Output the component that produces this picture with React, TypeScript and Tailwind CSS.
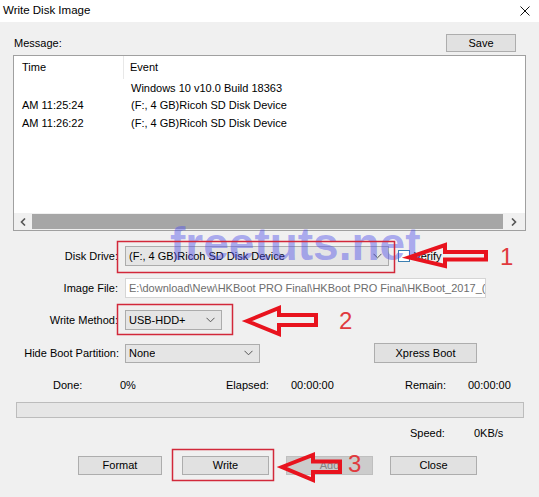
import React from "react";

const logRows = [
  { time: "", event: "Windows 10 v10.0 Build 18363" },
  { time: "AM 11:25:24", event: "(F:, 4 GB)Ricoh SD Disk Device" },
  { time: "AM 11:26:22", event: "(F:, 4 GB)Ricoh SD Disk Device" },
];

const Chevron = () => (
  <svg width="9" height="6" viewBox="0 0 9 6" className="shrink-0">
    <path d="M0.5 0.8 L4.5 4.8 L8.5 0.8" fill="none" stroke="#555" strokeWidth="1" />
  </svg>
);

const Combo = ({ value, className }: { value: string; className: string }) => (
  <div
    className={`flex items-center justify-between border border-[#acacac] bg-[#e5e5e5] pl-[3px] pr-[6px] ${className}`}
  >
    <span className="whitespace-nowrap overflow-hidden">{value}</span>
    <Chevron />
  </div>
);

const Btn = ({
  label,
  className,
  disabled,
}: {
  label: string;
  className: string;
  disabled?: boolean;
}) => (
  <div
    className={`flex items-center justify-center border ${
      disabled
        ? "border-[#bfbfbf] bg-[#cccccc] text-[#838383]"
        : "border-[#adadad] bg-[#e1e1e1]"
    } ${className}`}
  >
    {label}
  </div>
);

const Label = ({ text }: { text: string }) => (
  <div className="w-[105px] text-right whitespace-nowrap">{text}</div>
);

export default function App() {
  return (
    <div className="relative w-[539px] h-[497px] overflow-hidden bg-[#f0f0f0] font-['Liberation_Sans',Arial,sans-serif] text-[11px] text-black">
      {/* Title bar */}
      <div className="h-[22px] bg-white flex items-center justify-between pl-[3px] pr-[9px]">
        <span className="text-[11.5px]">Write Disk Image</span>
        <svg width="10" height="10" viewBox="0 0 10 10">
          <path d="M0.5 0.5 L9.5 9.5 M9.5 0.5 L0.5 9.5" stroke="#111" strokeWidth="1" />
        </svg>
      </div>

      <div className="px-[13px]">
        {/* Message + Save */}
        <div className="mt-[12px] h-[18px] flex items-center justify-between">
          <span className="pl-px">Message:</span>
          <Btn label="Save" className="w-[70px] h-[18px] mr-[10px]" />
        </div>

        {/* Log list */}
        <div className="mt-[3px] h-[176px] border border-[#a0a0a0] bg-white flex flex-col">
          <div className="h-[23px] flex items-center">
            <div className="w-[110px] h-full flex items-center pl-[8px] border-r border-[#e8e8e8]">
              Time
            </div>
            <div className="pl-[6px]">Event</div>
          </div>
          {logRows.map((row, i) => (
            <div key={i} className="h-[17.5px] flex items-center">
              <div className="w-[110px] pl-[8px]">{row.time}</div>
              <div className="pl-[7px]">{row.event}</div>
            </div>
          ))}
          <div className="flex-1" />
          <div className="h-[17px] flex items-center bg-[#f0f0f0]">
            <div className="w-[18px] flex items-center justify-center">
              <svg width="6" height="8" viewBox="0 0 6 8">
                <path d="M5 0.5 L1.5 4 L5 7.5" fill="none" stroke="#555" strokeWidth="1.6" />
              </svg>
            </div>
            <div className="flex-1 h-[15px] bg-[#a6a6a6]" />
            <div className="w-[22px] flex items-center justify-center">
              <svg width="6" height="8" viewBox="0 0 6 8">
                <path d="M1 0.5 L4.5 4 L1 7.5" fill="none" stroke="#555" strokeWidth="1.6" />
              </svg>
            </div>
          </div>
        </div>

        {/* Disk Drive */}
        <div className="mt-[15px] h-[20px] flex items-center">
          <Label text="Disk Drive:" />
          <Combo value="(F:, 4 GB)Ricoh SD Disk Device" className="ml-[7px] w-[264px] h-[20px]" />
          <div className="ml-[9px] w-[12px] h-[12px] border border-[#3c7fb1] bg-white" />
          <span className="ml-[4px]">Verify</span>
        </div>

        {/* Image File */}
        <div className="mt-[12px] h-[20px] flex items-center">
          <Label text="Image File:" />
          <div className="ml-[7px] w-[361px] h-[20px] flex items-center border border-[#d5d5d5] bg-white pl-[3px] text-[#6d6d6d] overflow-hidden whitespace-nowrap">
            E:\download\New\HKBoot PRO Final\HKBoot PRO Final\HKBoot_2017_(
          </div>
        </div>

        {/* Write Method */}
        <div className="mt-[12px] h-[20px] flex items-center">
          <Label text="Write Method:" />
          <Combo value="USB-HDD+" className="ml-[7px] w-[97px] h-[20px]" />
        </div>

        {/* Hide Boot Partition */}
        <div className="mt-[13px] h-[20px] flex items-center">
          <div className="w-[106px] text-right whitespace-nowrap">Hide Boot Partition:</div>
          <Combo value="None" className="ml-[6px] w-[135px] h-[19px]" />
          <Btn label="Xpress Boot" className="ml-[114px] w-[103px] h-[20px]" />
        </div>

        {/* Status */}
        <div className="mt-[15px] h-[15px] flex items-center pl-[40px]">
          <span className="w-[67px]">Done:</span>
          <span className="w-[106px]">0%</span>
          <span className="w-[65px]">Elapsed:</span>
          <span className="w-[114px]">00:00:00</span>
          <span className="w-[63px]">Remain:</span>
          <span>00:00:00</span>
        </div>

        <div className="mt-[9px] ml-[3px] w-[508px] h-[16px] border border-[#bcbcbc] bg-[#e6e6e6]" />

        <div className="mt-[8px] h-[15px] flex items-center pl-[397px]">
          <span className="w-[64px]">Speed:</span>
          <span>0KB/s</span>
        </div>

        {/* Buttons */}
        <div className="mt-[15px] h-[19px] flex pl-[65px]">
          <Btn label="Format" className="w-[84px] h-[19px]" />
          <Btn label="Write" className="ml-[20px] w-[87px] h-[19px]" />
          <Btn label="Add" disabled className="ml-[17px] w-[87px] h-[19px]" />
          <Btn label="Close" className="ml-[17px] w-[87px] h-[19px]" />
        </div>
      </div>

      {/* Watermark */}
      <div className="absolute left-[170px] top-[221px] text-[46px] leading-none font-bold text-[rgba(80,80,235,0.45)] pointer-events-none whitespace-nowrap">
        freetuts.net
      </div>

      {/* Annotations */}
      <svg className="absolute inset-0 pointer-events-none" width="539" height="497" viewBox="0 0 539 497">
        <g fill="none" stroke="#d2283a" strokeWidth="1.5">
          <rect x="117.5" y="241.5" width="277" height="31" />
          <rect x="117.5" y="304.5" width="115" height="30" />
          <rect x="172.5" y="449.5" width="101" height="31" />
        </g>
        <g fill="none" stroke="#e8131e" strokeWidth="4" strokeLinejoin="miter">
          <path d="M409 257.5 L445 245 L445 252 L486 252 L486 259.5 L445 259.5 L445 266 Z" />
          <path d="M247 321 L279 308 L279 315 L316 315 L316 325 L279 325 L279 334 Z" />
          <path d="M282 467 L313 455 L313 461.5 L340 461.5 L340 472 L313 472 L313 480 Z" />
        </g>
      </svg>
      <div className="absolute left-[500px] top-[245px] text-[24px] leading-none text-[#e03a3e]">1</div>
      <div className="absolute left-[339px] top-[309px] text-[24px] leading-none text-[#e03a3e]">2</div>
      <div className="absolute left-[348px] top-[452px] text-[24px] leading-none text-[#e03a3e]">3</div>
    </div>
  );
}
